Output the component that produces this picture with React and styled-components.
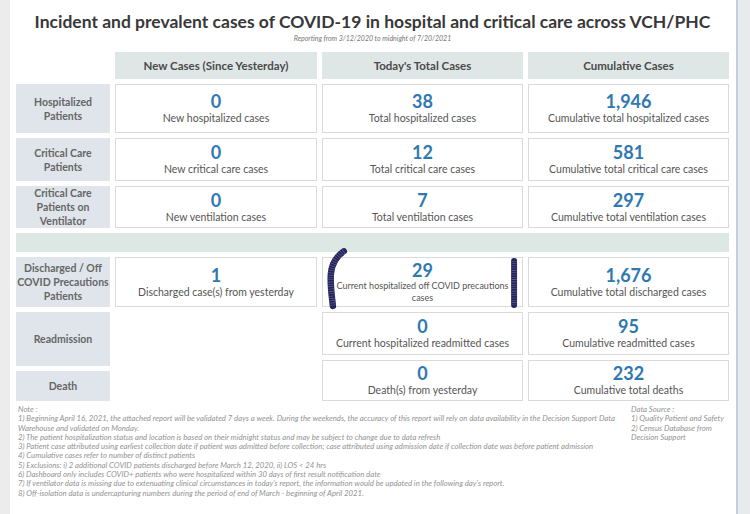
import React from 'react';
import styled, { createGlobalStyle } from 'styled-components';

const GlobalStyle = createGlobalStyle`
  html, body {
    margin: 0;
    padding: 0;
    background: #ebebeb;
  }
  * {
    box-sizing: border-box;
  }
`;

const Page = styled.div`
  display: flex;
  width: 750px;
  height: 514px;
  overflow: hidden;
  font-family: Lato, "Open Sans", sans-serif;
`;

const LeftGutter = styled.div`
  width: 10px;
  flex: none;
  background: #ececec;
`;

const Sheet = styled.main`
  width: 726px;
  flex: none;
  background: #fff;
  padding: 11px 7px 0 6px;
`;

const RightRail = styled.div`
  flex: 1;
  background: #e8ebee;
  border-left: 2px solid #c3ced8;
`;

const Title = styled.h1`
  margin: 0;
  font-size: 17.5px;
  line-height: 22px;
  font-weight: 700;
  color: #383838;
  text-align: center;
  white-space: nowrap;
`;

const Subtitle = styled.div`
  font-size: 7px;
  line-height: 10px;
  font-style: italic;
  color: #777;
  text-align: center;
  margin-bottom: 9px;
`;

const Table = styled.div`
  display: grid;
  grid-template-columns: 94px 202px 201px 201px;
  grid-template-rows: 27px 49px 43px 42px 19px 50px 89px;
  column-gap: 5px;
  row-gap: 5px;
`;

const HeaderCell = styled.div`
  display: flex;
  align-items: center;
  justify-content: center;
  background: ${p => (p.$blank ? 'transparent' : '#dfe7e6')};
  font-size: 11.5px;
  font-weight: 700;
  color: #4a4a4a;
`;

const RowLabel = styled.div`
  display: flex;
  align-items: center;
  justify-content: center;
  background: #dfe5ea;
  font-size: 10.5px;
  line-height: 14px;
  font-weight: 700;
  color: #666;
  text-align: center;
  height: ${p => (p.$h ? `${p.$h}px` : 'auto')};
`;

const Cell = styled.div`
  position: relative;
  display: flex;
  flex-direction: column;
  align-items: center;
  justify-content: center;
  border: 1px solid #dadada;
  background: #fff;
  text-align: center;
  height: ${p => (p.$h ? `${p.$h}px` : 'auto')};
`;

const Value = styled.div`
  font-size: 18px;
  line-height: 20px;
  font-weight: 700;
  color: #2f78b1;
`;

const Caption = styled.div`
  font-size: ${p => (p.$small ? 9 : 10.5)}px;
  line-height: ${p => (p.$small ? 12 : 15)}px;
  color: #555;
  white-space: ${p => (p.$small ? 'normal' : 'nowrap')};
`;

const Separator = styled.div`
  grid-column: 1 / -1;
  background: #dde8e5;
`;

const Stack = styled.div`
  display: flex;
  flex-direction: column;
  gap: 5px;
`;

const Scribble = styled.svg`
  position: absolute;
  left: 0;
  top: 0;
  width: 100%;
  height: 100%;
  overflow: visible;
  pointer-events: none;
`;

const Footer = styled.div`
  display: flex;
  margin-top: 4px;
  color: #939393;
  font-style: italic;
  font-size: 7.75px;
  line-height: 9.3px;
`;

const NoteBlock = styled.div`
  width: 615px;
  flex: none;
  padding-left: 2px;
`;

const NoteLine = styled.div`
  white-space: nowrap;
`;

const SourceBlock = styled.div`
  width: 98px;
`;

const notes = [
  'Note :',
  '1) Beginning April 16, 2021, the attached report will be validated 7 days a week. During the weekends, the accuracy of this report will rely on data availability in the Decision Support Data',
  'Warehouse and validated on Monday.',
  '2) The patient hospitalization status and location is based on their midnight status and may be subject to change due to data refresh',
  '3) Patient case attributed using earliest collection date if patient was admitted before collection; case attributed using admission date if collection date was before patient admission',
  '4) Cumulative cases refer to  number of distinct patients',
  '5) Exclusions:  i) 2 additional COVID patients discharged before March  12, 2020, ii) LOS < 24 hrs',
  '6) Dashboard only includes COVID+ patients who were hospitalized within 30 days of  first result notification date',
  "7) If ventilator data is missing due to extenuating clinical circumstances in today's report, the information would be updated in the following day's report.",
  '8) Off-isolation data is undercapturing numbers during the period of end of March - beginning of April 2021.',
];

const sources = [
  'Data Source :',
  '1) Quality Patient and Safety',
  '2) Census Database from',
  'Decision Support',
];

const rows = [
  {
    label: ['Hospitalized', 'Patients'],
    cells: [
      ['0', 'New hospitalized cases'],
      ['38', 'Total hospitalized cases'],
      ['1,946', 'Cumulative total hospitalized cases'],
    ],
  },
  {
    label: ['Critical Care', 'Patients'],
    cells: [
      ['0', 'New critical care cases'],
      ['12', 'Total critical care cases'],
      ['581', 'Cumulative total critical care cases'],
    ],
  },
  {
    label: ['Critical Care', 'Patients on', 'Ventilator'],
    cells: [
      ['0', 'New ventilation cases'],
      ['7', 'Total ventilation cases'],
      ['297', 'Cumulative total ventilation cases'],
    ],
  },
];

const Label = ({ lines, h }) => (
  <RowLabel $h={h}>
    <div>
      {lines.map(l => (
        <div key={l}>{l}</div>
      ))}
    </div>
  </RowLabel>
);

const DataCell = ({ value, caption, h }) => (
  <Cell $h={h}>
    <Value>{value}</Value>
    <Caption>{caption}</Caption>
  </Cell>
);

// pen marks someone drew over the "29" box
const PenMarks = () => (
  <Scribble viewBox="0 0 201 50" preserveAspectRatio="none">
    <path d="M21 -7 C14 -2 9 6 8 16 C7 28 9 40 10 50" fill="none" stroke="#23235c" strokeWidth="6.5" strokeLinecap="round" />
    <path d="M21 -7 C14 -2 9 6 8 16 C7 28 9 40 10 50" fill="none" stroke="#6a6a9a" strokeWidth="6" strokeDasharray="0.6 1.8" />
    <path d="M193 3 L193 49" fill="none" stroke="#23235c" strokeWidth="6" strokeLinecap="round" />
    <path d="M193 3 L193 49" fill="none" stroke="#6a6a9a" strokeWidth="5.5" strokeDasharray="0.6 1.8" />
  </Scribble>
);

const App = () => {
  return (
    <Page>
      <GlobalStyle />
      <LeftGutter />
      <Sheet>
        <Title>Incident and prevalent cases of COVID-19 in hospital and critical care across VCH/PHC</Title>
        <Subtitle>Reporting from 3/12/2020 to midnight of 7/20/2021</Subtitle>

        <Table>
          <HeaderCell $blank />
          <HeaderCell>New Cases (Since Yesterday)</HeaderCell>
          <HeaderCell>Today's Total Cases</HeaderCell>
          <HeaderCell>Cumulative Cases</HeaderCell>

          {rows.map(row => (
            <React.Fragment key={row.label.join(' ')}>
              <Label lines={row.label} />
              {row.cells.map(([v, c]) => (
                <DataCell key={c} value={v} caption={c} />
              ))}
            </React.Fragment>
          ))}

          <Separator />

          <Label lines={['Discharged / Off', 'COVID Precautions', 'Patients']} />
          <DataCell value="1" caption="Discharged case(s) from yesterday" />
          <Cell>
            <Value>29</Value>
            <Caption $small>
              Current hospitalized off COVID precautions
              <br />
              cases
            </Caption>
            <PenMarks />
          </Cell>
          <DataCell value="1,676" caption="Cumulative total discharged cases" />

          <Stack>
            <Label lines={['Readmission']} h={54} />
            <Label lines={['Death']} h={30} />
          </Stack>
          <div />
          <Stack>
            <DataCell value="0" caption="Current hospitalized readmitted cases" h={43} />
            <DataCell value="0" caption="Death(s) from yesterday" h={41} />
          </Stack>
          <Stack>
            <DataCell value="95" caption="Cumulative readmitted cases" h={43} />
            <DataCell value="232" caption="Cumulative total deaths" h={41} />
          </Stack>
        </Table>

        <Footer>
          <NoteBlock>
            {notes.map(n => (
              <NoteLine key={n}>{n}</NoteLine>
            ))}
          </NoteBlock>
          <SourceBlock>
            {sources.map(s => (
              <NoteLine key={s}>{s}</NoteLine>
            ))}
          </SourceBlock>
        </Footer>
      </Sheet>
      <RightRail />
    </Page>
  );
};

export default App;
